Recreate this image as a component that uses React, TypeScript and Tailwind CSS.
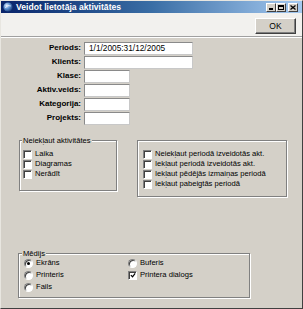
import React from "react";

const font = { fontFamily: '"Liberation Sans", Arial, sans-serif' };

const Check = ({ checked }: { checked?: boolean }) => (
  <span className="w-[9px] h-[9px] shrink-0 flex items-center justify-center bg-white border border-t-[#808080] border-l-[#808080] border-r-white border-b-white shadow-[inset_1px_1px_0_#404040]">
    {checked && (
      <svg width="7" height="7" viewBox="0 0 7 7" className="ml-[1px] mt-[1px]">
        <path d="M1 3 L3 5 L6 1" stroke="#000" strokeWidth="1.4" fill="none" />
      </svg>
    )}
  </span>
);

const Radio = ({ checked }: { checked?: boolean }) => (
  <span className="w-[9px] h-[9px] shrink-0 rounded-full flex items-center justify-center bg-white border border-t-[#808080] border-l-[#808080] border-r-white border-b-white shadow-[inset_1px_1px_0_#404040]">
    {checked && <span className="w-[3px] h-[3px] rounded-full bg-black" />}
  </span>
);

const Field = ({ label, value, wide }: { label: string; value?: string; wide?: boolean }) => (
  <div className="flex items-center h-[14px]">
    <span className="w-[81px] pr-[1px] text-right font-bold text-[8px] text-black">{label}</span>
    <span
      className={`ml-[2px] h-[13px] bg-white border border-[#8a8a8a] border-r-[#c8c8c8] border-b-[#c8c8c8] pl-[4px] text-[8.3px] leading-[11px] text-black ${
        wide ? "w-[109px]" : "w-[46px]"
      }`}
    >
      {value}
    </span>
  </div>
);

const CheckRow = ({ label, checked }: { label: string; checked?: boolean }) => (
  <div className="flex items-center h-[10px] gap-[3px]">
    <Check checked={checked} />
    <span className="text-[7.6px] leading-[10px] text-black whitespace-nowrap">{label}</span>
  </div>
);

const RadioRow = ({ label, checked }: { label: string; checked?: boolean }) => (
  <div className="flex items-center h-[12px] gap-[3px]">
    <Radio checked={checked} />
    <span className="text-[7.6px] leading-[12px] text-black whitespace-nowrap">{label}</span>
  </div>
);

const groupBox =
  "relative border border-[#808080] shadow-[inset_1px_1px_0_#fff,1px_1px_0_#fff]";

export default function App() {
  return (
    <div
      className="w-[303px] h-[309px] flex flex-col bg-[#d4d0c8] border border-t-[#e8e6e0] border-l-[#e8e6e0] border-r-[#404040] border-b-[#404040]"
      style={font}
    >
      {/* title bar */}
      <div className="h-[12px] flex items-center bg-gradient-to-r from-[#0a246a] via-[#3a6ea5] to-[#a6caf0]">
        <svg width="10" height="10" viewBox="0 0 10 10" className="ml-[2px]">
          <defs>
            <radialGradient id="ic" cx="35%" cy="35%" r="70%">
              <stop offset="0" stopColor="#e8f0ff" />
              <stop offset="0.5" stopColor="#5a8fd0" />
              <stop offset="1" stopColor="#1c3f7a" />
            </radialGradient>
          </defs>
          <circle cx="5" cy="5" r="4.6" fill="url(#ic)" />
          <path d="M2 6 Q5 2 8 4" stroke="#fff" strokeWidth="0.8" fill="none" opacity="0.8" />
        </svg>
        <span className="ml-[3px] text-white font-bold text-[8.6px] leading-[12px] whitespace-nowrap">
          Veidot lietotāja aktivitātes
        </span>
        <div className="ml-auto mr-[4px] flex items-center">
          <div className="w-[10px] h-[9px] bg-[#d4d0c8] border border-t-white border-l-white border-r-[#404040] border-b-[#404040] flex items-end justify-center pb-[1px]">
            <span className="w-[4px] h-[1.5px] bg-black" />
          </div>
          <div className="w-[10px] h-[9px] bg-[#d4d0c8] border border-t-white border-l-white border-r-[#404040] border-b-[#404040] flex items-center justify-center">
            <span className="w-[6px] h-[5px] border border-black border-t-2" />
          </div>
          <div className="ml-[2px] w-[10px] h-[9px] bg-[#d4d0c8] border border-t-white border-l-white border-r-[#404040] border-b-[#404040] flex items-center justify-center">
            <svg width="6" height="5" viewBox="0 0 6 5">
              <path d="M0.5 0.5 L5.5 4.5 M5.5 0.5 L0.5 4.5" stroke="#000" strokeWidth="1.3" />
            </svg>
          </div>
        </div>
      </div>

      {/* toolbar */}
      <div className="h-[24px] bg-[#f2f1ee] flex items-center justify-end pr-[6px] pt-[2px] border-b border-[#a0a0a0]">
        <button className="w-[41px] h-[16px] bg-[#d4d0c8] border border-t-white border-l-white border-r-[#404040] border-b-[#404040] shadow-[inset_-1px_-1px_0_#808080] text-[8.5px] leading-[14px] text-black">
          OK
        </button>
      </div>
      <div className="h-px bg-white" />

      {/* form */}
      <div className="flex flex-col pt-[3px]">
        <Field label="Periods:" value="1/1/2005:31/12/2005" wide />
        <Field label="Klients:" wide />
        <Field label="Klase:" />
        <Field label="Aktiv.veids:" />
        <Field label="Kategorija:" />
        <Field label="Projekts:" />
      </div>

      {/* groups */}
      <div className="flex items-start mt-[15px]">
        <div className={`${groupBox} ml-[18px] w-[98px] h-[51px] pt-[8px] pl-[3px]`}>
          <span className="absolute -top-[5px] left-[2px] px-[1px] bg-[#d4d0c8] text-[7.6px] leading-[9px] text-black whitespace-nowrap">
            Neiekļaut aktivitātes
          </span>
          <CheckRow label="Laika" />
          <CheckRow label="Diagramas" />
          <CheckRow label="Nerādīt" />
        </div>
        <div className={`${groupBox} ml-[20px] w-[150px] h-[57px] pt-[8px] pl-[5px]`}>
          <CheckRow label="Neiekļaut periodā izveidotās akt." />
          <CheckRow label="Iekļaut periodā izveidotās akt." />
          <CheckRow label="Iekļaut pēdējās izmaiņas periodā" />
          <CheckRow label="Iekļaut pabeigtās periodā" />
        </div>
      </div>

      <div className={`${groupBox} ml-[17px] mt-[56px] w-[232px] h-[45px] pt-[3px] pl-[5px] flex`}>
        <span className="absolute -top-[5px] left-[3px] px-[1px] bg-[#d4d0c8] text-[7.6px] leading-[9px] text-black whitespace-nowrap">
          Mēdijs
        </span>
        <div className="flex flex-col w-[104px]">
          <RadioRow label="Ekrāns" checked />
          <RadioRow label="Printeris" />
          <RadioRow label="Fails" />
        </div>
        <div className="flex flex-col">
          <RadioRow label="Buferis" />
          <div className="flex items-center h-[12px] gap-[3px]">
            <Check checked />
            <span className="text-[7.6px] leading-[12px] text-black whitespace-nowrap">Printera dialogs</span>
          </div>
        </div>
      </div>
    </div>
  );
}
